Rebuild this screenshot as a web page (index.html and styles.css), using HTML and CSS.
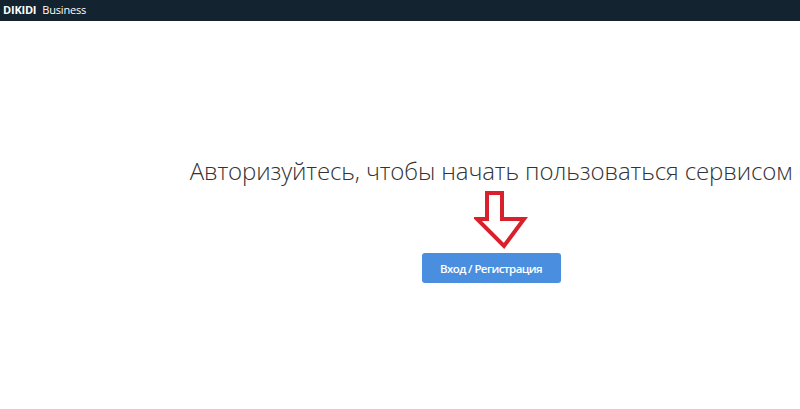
FILE: index.html
```html
<!DOCTYPE html>
<html lang="ru">
<head>
<meta charset="utf-8">
<title>DIKIDI Business</title>
<link rel="stylesheet" href="styles.css">
</head>
<body>
<header class="topbar">
  <span class="brand">DIKIDI</span>
  <span class="brand-sub">Business</span>
</header>
<main class="content">
  <h1 class="title">Авторизуйтесь, чтобы начать пользоваться сервисом</h1>
  <svg class="arrow" width="56" height="60" viewBox="0 0 56 60">
    <polygon points="13,3 28,3 28,29 50,29 30,56 3,29 13,29" fill="none" stroke="#d9212e" stroke-width="4" stroke-linejoin="miter"/>
  </svg>
  <button class="login-btn" type="button">Вход / Регистрация</button>
</main>
</body>
</html>
```
FILE: styles.css
```css
html, body {
  margin: 0;
  padding: 0;
  background: #ffffff;
}
body {
  font-family: "Open Sans", "Noto Sans", sans-serif;
  width: 800px;
  height: 409px;
  overflow: hidden;
}
.topbar {
  height: 21px;
  background: #132330;
  display: flex;
  align-items: center;
  gap: 6px;
  padding-left: 3px;
  color: #ffffff;
  font-size: 11px;
  letter-spacing: -0.2px;
  box-sizing: border-box;
  padding-bottom: 2px;
}
.brand {
  font-weight: 700;
}
.brand-sub {
  font-weight: 400;
}
.content {
  display: flex;
  flex-direction: column;
  align-items: center;
  padding-left: 182px;
  padding-top: 133px;
}
.title {
  margin: 0;
  font-weight: 300;
  font-size: 24px;
  line-height: 34px;
  letter-spacing: -0.12px;
  color: #333333;
  white-space: nowrap;
}
.arrow {
  display: block;
  margin-top: 2px;
  margin-left: 22px;
}
.login-btn {
  margin-top: 3px;
  width: 139px;
  height: 30px;
  border: none;
  border-radius: 3px;
  background: #4a8fdf;
  color: #ffffff;
  font-family: "Open Sans", sans-serif;
  font-size: 11.5px;
  font-weight: 600;
  letter-spacing: -0.6px;
  cursor: pointer;
  padding: 0;
}
```
